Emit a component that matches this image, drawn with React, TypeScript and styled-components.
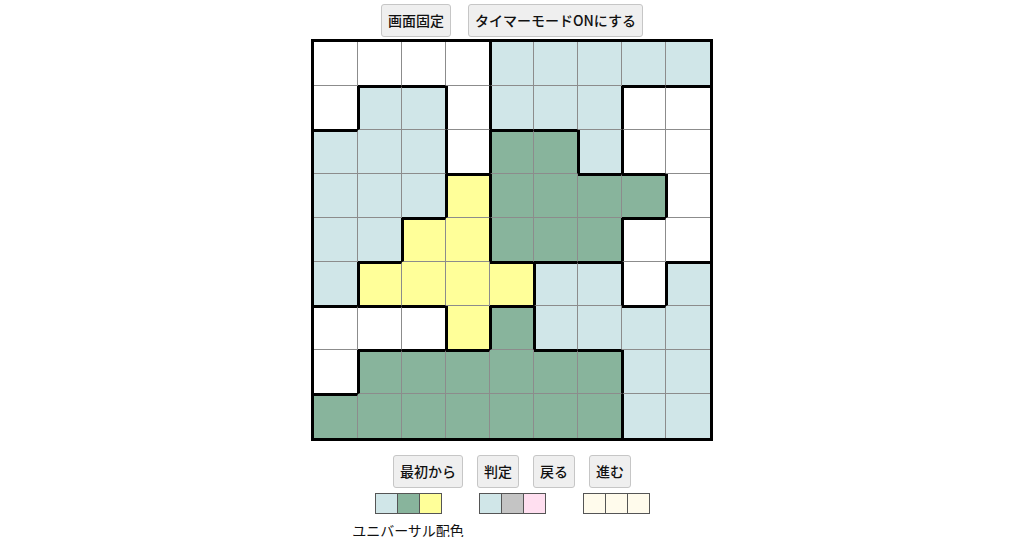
import { createGlobalStyle, styled } from "styled-components";

const GlobalStyle = createGlobalStyle`
  html, body {
    margin: 0;
    padding: 0;
    background: #fff;
    font-family: "Noto Sans CJK JP", "Noto Sans", sans-serif;
  }
`;

const COLORS: Record<string, string> = {
  W: "#ffffff",
  L: "#d0e6e8",
  G: "#88b49c",
  Y: "#ffff99",
};

const BOARD = [
  "WWWWLLLLL",
  "WLLWLLLWW",
  "LLLWGGLWW",
  "LLLYGGGGW",
  "LLYYGGGWW",
  "LYYYYLLWL",
  "WWWYGLLLL",
  "WGGGGGGLL",
  "GGGGGGGLL",
];

const SIZE = 9;

const Page = styled.div`
  display: flex;
  flex-direction: column;
  align-items: center;
  padding-top: 4px;
`;

const Toolbar = styled.div<{ $gap: number }>`
  display: flex;
  justify-content: center;
  gap: ${(p) => p.$gap}px;
`;

const Button = styled.button`
  font-family: "Noto Sans CJK JP", "Noto Sans", sans-serif;
  font-size: 14px;
  font-weight: 500;
  line-height: 19px;
  color: #111;
  background: #efefef;
  border: 1px solid #c6c6c6;
  border-radius: 3px;
  padding: 6px 6px;
  cursor: pointer;
`;

const Board = styled.div`
  margin-top: 2px;
  display: grid;
  grid-template-columns: repeat(${SIZE}, 44px);
  grid-template-rows: repeat(${SIZE}, 44px);
  border: 3px solid #000;
`;

const line = (last: boolean, thick: boolean) =>
  last ? "none" : `1px solid ${thick ? "#000" : "#8c8c8c"}`;

const Cell = styled.div<{
  $bg: string;
  $top: boolean;
  $left: boolean;
  $right: boolean;
  $bottom: boolean;
  $lastCol: boolean;
  $lastRow: boolean;
}>`
  box-sizing: border-box;
  background: ${(p) => p.$bg};
  border-top: ${(p) => (p.$top ? "2px solid #000" : "none")};
  border-left: ${(p) => (p.$left ? "2px solid #000" : "none")};
  border-right: ${(p) => line(p.$lastCol, p.$right)};
  border-bottom: ${(p) => line(p.$lastRow, p.$bottom)};
`;

const Controls = styled(Toolbar)`
  margin-top: 14px;
`;

const Palettes = styled.div`
  display: flex;
  gap: 37px;
  margin-top: 5px;
`;

const PaletteGroup = styled.div`
  display: flex;
  flex-direction: column;
  align-items: center;
`;

const Swatches = styled.div`
  display: flex;
`;

const Swatch = styled.div<{ $color: string }>`
  width: 21px;
  height: 19px;
  background: ${(p) => p.$color};
  border: 1px solid #555;
  & + & {
    margin-left: -1px;
  }
`;

const Caption = styled.div`
  width: 0;
  display: flex;
  justify-content: center;
  white-space: nowrap;
  margin-top: 9px;
  font-size: 14px;
  line-height: 14px;
  color: #111;
`;

const PALETTES = [
  { colors: ["#d0e6e8", "#88b49c", "#ffff99"], label: "ユニバーサル配色" },
  { colors: ["#d0e6e8", "#c4c4c4", "#ffdff0"] },
  { colors: ["#fffbec", "#fffbec", "#fffbec"] },
];

const at = (r: number, c: number) => BOARD[r]?.[c];

export default function App() {
  return (
    <Page>
      <GlobalStyle />
      <Toolbar $gap={17}>
        <Button>画面固定</Button>
        <Button>タイマーモードONにする</Button>
      </Toolbar>
      <Board>
        {BOARD.map((row, r) =>
          row.split("").map((k, c) => (
            <Cell
              key={`${r}-${c}`}
              $bg={COLORS[k]}
              $top={r > 0 && at(r - 1, c) !== k}
              $left={c > 0 && at(r, c - 1) !== k}
              $right={c < SIZE - 1 && at(r, c + 1) !== k}
              $bottom={r < SIZE - 1 && at(r + 1, c) !== k}
              $lastCol={c === SIZE - 1}
              $lastRow={r === SIZE - 1}
            />
          ))
        )}
      </Board>
      <Controls $gap={14}>
        <Button>最初から</Button>
        <Button>判定</Button>
        <Button>戻る</Button>
        <Button>進む</Button>
      </Controls>
      <Palettes>
        {PALETTES.map((p, i) => (
          <PaletteGroup key={i}>
            <Swatches>
              {p.colors.map((col, j) => (
                <Swatch key={j} $color={col} />
              ))}
            </Swatches>
            {p.label && <Caption>{p.label}</Caption>}
          </PaletteGroup>
        ))}
      </Palettes>
    </Page>
  );
}
